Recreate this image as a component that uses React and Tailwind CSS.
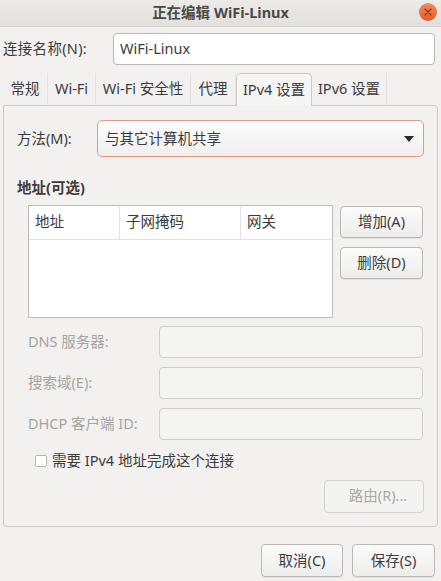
import React from "react";

const font = { fontFamily: '"Noto Sans", "Noto Sans CJK SC", sans-serif' };

function Btn({ children, className = "", disabled = false }) {
  return (
    <div
      className={
        "flex items-center justify-center rounded-[4px] border text-[14.5px] " +
        (disabled
          ? "border-[#d3d2cf] bg-[#f3f3f2] text-[#a9a9a7] "
          : "border-[#b9b8b5] bg-gradient-to-b from-[#fbfbfb] to-[#ededec] text-[#3c3c3c] shadow-[0_1px_0_rgba(0,0,0,0.06)] ") +
        className
      }
    >
      {children}
    </div>
  );
}

function Tab({ children, active = false, w }) {
  return (
    <div
      className={
        "flex h-[32px] items-center justify-center text-[14.5px] " +
        (active
          ? "relative z-10 rounded-t-[5px] border border-b-0 border-[#cac9c6] bg-[#f5f5f4] text-[#3c3c3c]"
          : "border-r border-[#e3e2df] text-[#3c3c3c]") +
        " " +
        w
      }
    >
      {children}
    </div>
  );
}

export default function App() {
  return (
    <div
      className="flex h-[581px] w-[441px] flex-col overflow-hidden bg-[#f2f1f0] text-[#3c3c3c]"
      style={font}
    >
      {/* title bar */}
      <div className="relative flex h-[27px] items-center justify-center border-b border-[#d3d1cc] bg-gradient-to-b from-[#edebe8] to-[#e2e0dc]">
        <span className="text-[14.5px] font-bold text-[#4a4a48]">正在编辑 WiFi-Linux</span>
        <div className="absolute right-[4px] top-[3px] flex h-[18px] w-[18px] items-center justify-center rounded-full bg-gradient-to-b from-[#f58a5c] to-[#e4582f]">
          <svg width="8" height="8" viewBox="0 0 8 8">
            <path d="M1 1L7 7M7 1L1 7" stroke="#8a3416" strokeWidth="1.2" strokeLinecap="round" />
          </svg>
        </div>
      </div>

      {/* connection name */}
      <div className="mt-[6px] flex items-center pl-[3px] pr-[6px]">
        <span className="w-[110px] text-[14.5px] tracking-[0.3px]">连接名称(N):</span>
        <div className="flex h-[32px] flex-1 items-center rounded-[4px] border border-[#b8b7b4] bg-white px-[6px] text-[14.5px]">
          WiFi-Linux
        </div>
      </div>

      {/* tabs */}
      <div className="mt-[8px] flex items-end pl-[3px]">
        <Tab w="w-[45px]">常规</Tab>
        <Tab w="w-[48px]">Wi-Fi</Tab>
        <Tab w="w-[95px]">Wi-Fi 安全性</Tab>
        <Tab w="w-[45px]">代理</Tab>
        <div className="-mb-px">
          <Tab active w="w-[76px] h-[33px]">IPv4 设置</Tab>
        </div>
        <Tab w="w-[75px]">IPv6 设置</Tab>
      </div>

      {/* panel */}
      <div className="mx-[3px] flex h-[422px] w-[435px] flex-col rounded-b-[4px] rounded-tr-[4px] border border-[#cac9c6] bg-[#f2f1f0] px-[13px]">
        {/* method */}
        <div className="mt-[14px] flex items-center">
          <span className="w-[80px] text-[14.5px]">方法(M):</span>
          <div className="flex h-[37px] flex-1 items-center justify-between rounded-[5px] border border-[#de9a83] bg-gradient-to-b from-[#fcfcfc] to-[#f0efee] pl-[7px] pr-[9px] text-[14.5px]">
            <span>与其它计算机共享</span>
            <svg width="10" height="6" viewBox="0 0 10 6">
              <path d="M0 0H10L5 6Z" fill="#2b2b2b" />
            </svg>
          </div>
        </div>

        {/* address */}
        <div className="mt-[20px] text-[14.5px] font-bold">地址(可选)</div>

        <div className="ml-[11px] mt-[6px] flex">
          <div className="flex h-[113px] w-[305px] flex-col border border-[#bdbcb9] bg-white">
            <div className="flex h-[34px] border-b border-[#e2e1df] text-[14.5px]">
              <div className="flex w-[91px] items-center border-r border-[#e2e1df] pl-[6px]">地址</div>
              <div className="flex w-[121px] items-center border-r border-[#e2e1df] pl-[6px]">子网掩码</div>
              <div className="flex flex-1 items-center pl-[6px]">网关</div>
            </div>
          </div>
          <div className="ml-[7px] flex flex-col gap-[9px] pt-[1px]">
            <Btn className="h-[32px] w-[83px]">增加(A)</Btn>
            <Btn className="h-[32px] w-[83px]">删除(D)</Btn>
          </div>
        </div>

        {/* DNS etc */}
        <div className="ml-[11px] mt-[8px] flex flex-col gap-[9px] text-[14.5px] text-[#a5a4a1]">
          {["DNS 服务器:", "搜索域(E):", "DHCP 客户端 ID:"].map((l) => (
            <div key={l} className="flex items-center">
              <span className="w-[131px]">{l}</span>
              <div className="h-[32px] w-[264px] rounded-[4px] border border-[#cfcecb] bg-[#f4f4f3]" />
            </div>
          ))}
        </div>

        {/* checkbox */}
        <div className="ml-[18px] mt-[10px] flex items-center text-[14.5px]">
          <div className="h-[12px] w-[12px] rounded-[2px] border border-[#b5b4b1] bg-white" />
          <span className="ml-[5px]">需要 IPv4 地址完成这个连接</span>
        </div>

        <div className="mt-[8px] flex justify-end">
          <Btn disabled className="h-[33px] w-[100px] pl-[8px]">路由(R)...</Btn>
        </div>
      </div>

      {/* bottom buttons */}
      <div className="mt-[17px] flex justify-end gap-[9px] pr-[6px]">
        <Btn className="h-[33px] w-[82px]">取消(C)</Btn>
        <Btn className="h-[33px] w-[83px]">保存(S)</Btn>
      </div>
    </div>
  );
}
